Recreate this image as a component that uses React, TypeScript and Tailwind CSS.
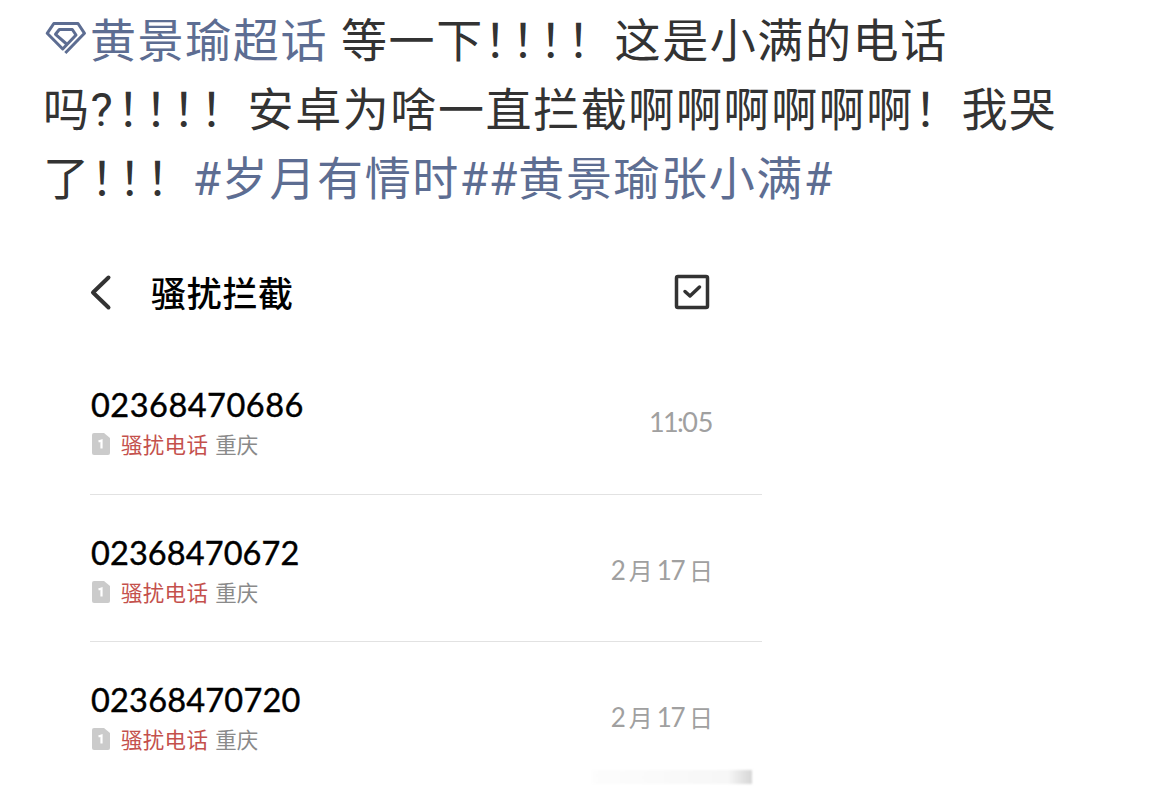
const calls = [
  { number: "02368470686", place: "重庆", time: "11:05", tracking: "tracking-[0.5px]" },
  { number: "02368470672", place: "重庆", date: ["2", "17"], tracking: "tracking-[0.1px]" },
  { number: "02368470720", place: "重庆", date: ["2", "17"], tracking: "tracking-[0.2px]" },
];

function Bangs({ count }: { count: number }) {
  return (
    <>
      <span className="tracking-[-18.3px]">{"！".repeat(count - 1)}</span>！
    </>
  );
}

function Hash({ children }: { children: string }) {
  return <span className="font-[Roboto] text-[46px] tracking-[0.9px]">{children}</span>;
}

function TopicIcon() {
  return (
    <svg className="mt-[18px] mr-[3px] ml-[2px] h-[34px] w-[42px] shrink-0" viewBox="0 0 42 34" fill="none" stroke="#5d6d92" strokeWidth="3" strokeLinejoin="round">
      <path d="M20.300 32 39.500 12.300 33 2.500H8.800L2.200 12.300 17.700 28 31 14 27.300 8.500H14.300L10.500 13.300 21 22.500" />
    </svg>
  );
}

function SimIcon() {
  return (
    <svg className="h-[22px] w-[18px]" viewBox="0 0 18 22">
      <path d="M2 0H12L18 5V20Q18 22 16 22H2Q0 22 0 20V2Q0 0 2 0Z" fill="#cbcbcb" />
      <path d="M6.500 8.500 9.500 7.500V15.500" stroke="#fff" strokeWidth="2.200" fill="none" />
    </svg>
  );
}

function CallRow({ call }) {
  return (
    <li className="flex h-[147.5px] justify-between border-b border-[#e2e2e2] pr-[49px] last:border-0">
      <div className="pt-[38px] pl-px">
        <div className={`font-[Lato] text-[32.5px] leading-[40px] text-black [-webkit-text-stroke:0.4px_black] ${call.tracking}`}>
          {call.number}
        </div>
        <div className="mt-[4px] flex h-[30px] items-center text-[21.5px] leading-[30px]">
          <span className="mr-[11px] ml-[1px]">
            <SimIcon />
          </span>
          <span className="tracking-[0.3px] text-[#c4504c]">骚扰电话</span>
          <span className="ml-[7px] text-[#8a8a8a]">{call.place}</span>
        </div>
      </div>
      <div className="pt-[55px] leading-[40px] text-[#a0a0a0]">
        {call.time ? (
          <span className="font-[Lato] text-[27px] tracking-[-1.6px]">
            11:<span className="tracking-[-0.3px]">05</span>
          </span>
        ) : (
          <span className="flex items-center text-[24px]">
            <span className="font-[Lato] text-[26px]">{call.date[0]}</span>
            <span className="ml-[3px]">月</span>
            <span className="ml-[4px] font-[Lato] text-[26px] tracking-[-1.5px]">{call.date[1]}</span>
            <span className="ml-[5px]">日</span>
          </span>
        )}
      </div>
    </li>
  );
}

export default function App() {
  return (
    <div className="relative h-[798px] w-full overflow-hidden bg-white font-['Noto_Sans_CJK_SC',sans-serif]" lang="zh-CN">
      <div className="pt-[3px] pl-[43px] text-[46px] leading-[69px] tracking-[1.6px] whitespace-nowrap text-[#333]">
        <div className="flex h-[69px]">
          <TopicIcon />
          <span className="text-[#5d6d92]">黄景瑜超话</span>
          <span className="ml-[13px]">
            等一下
            <Bangs count={4} />
            这是小满的电话
          </span>
        </div>
        <div className="h-[69px]">
          吗<span className="font-[Roboto] text-[47px] tracking-[4px]">?</span>
          <Bangs count={4} />
          安卓为啥一直拦截啊啊啊啊啊啊！我哭
        </div>
        <div className="h-[69px]">
          了
          <Bangs count={3} />
          <span className="-ml-px text-[#5d6d92]">
            <Hash>#</Hash>岁月有情时<Hash>##</Hash>黄景瑜张小满<Hash>#</Hash>
          </span>
        </div>
      </div>

      <div className="w-[762px] pt-[37px] pl-[90px]">
        <div className="flex h-[100px] items-start pr-[52px]">
          <svg className="mt-[24px] h-[40px] w-[24px]" viewBox="0 0 24 40" fill="none" stroke="#333" strokeWidth="4" strokeLinecap="round" strokeLinejoin="round">
            <path d="M18.500 6.500 3 21.500 18.500 36.500" />
          </svg>
          <h1 className="mt-[17px] ml-[37px] text-[35px] leading-[56px] font-medium tracking-[0.7px] text-black">骚扰拦截</h1>
          <svg className="mt-[27px] ml-auto h-[36px] w-[36px]" viewBox="0 0 36 36" fill="none" stroke="#333" strokeWidth="3.500" strokeLinecap="round" strokeLinejoin="round">
            <rect x="2.500" y="2.500" width="31" height="31" rx="1.500" />
            <path d="M11 17.500 16 22 25.500 13" />
          </svg>
        </div>
        <ul>
          {calls.map((call) => (
            <CallRow key={call.number} call={call} />
          ))}
        </ul>
      </div>

      {/* faded edge of the next item */}
      <div className="absolute top-[770px] left-[592px] h-[14px] w-[160px] bg-linear-to-r from-[#fdfdfd] via-[#f7f7f7] via-85% to-[#d6d6d6] blur-[1px]" />
    </div>
  );
}
